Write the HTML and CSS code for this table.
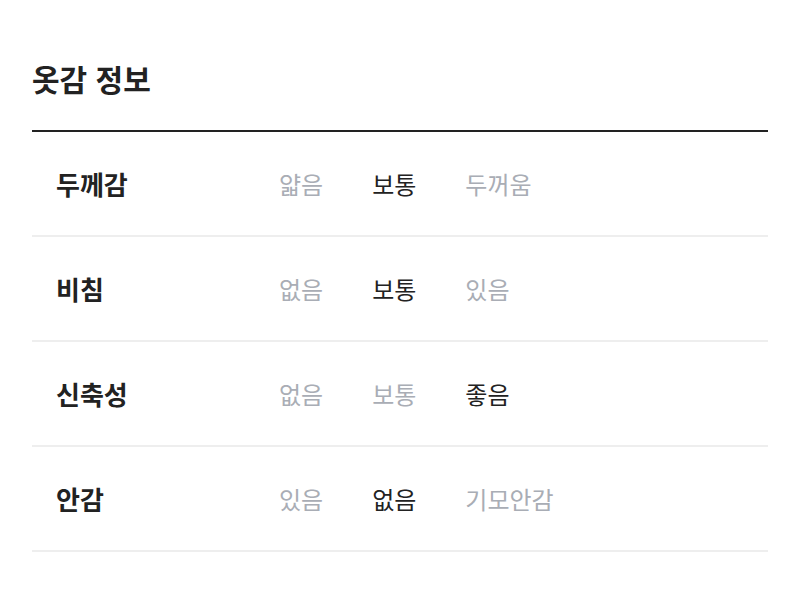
FILE: index.html
```html
<!DOCTYPE html>
<html lang="ko">
<head>
<meta charset="utf-8">
<link rel="stylesheet" href="styles.css">
</head>
<body>
<section class="fabric">
  <h2 class="title">옷감 정보</h2>
  <div class="table">
    <div class="row">
      <div class="label">두께감</div>
      <div class="opts"><span class="opt">얇음</span><span class="opt on">보통</span><span class="opt">두꺼움</span></div>
    </div>
    <div class="row">
      <div class="label">비침</div>
      <div class="opts"><span class="opt">없음</span><span class="opt on">보통</span><span class="opt">있음</span></div>
    </div>
    <div class="row">
      <div class="label">신축성</div>
      <div class="opts"><span class="opt">없음</span><span class="opt">보통</span><span class="opt on">좋음</span></div>
    </div>
    <div class="row">
      <div class="label">안감</div>
      <div class="opts"><span class="opt">있음</span><span class="opt on">없음</span><span class="opt">기모안감</span></div>
    </div>
  </div>
</section>
</body>
</html>
```
FILE: styles.css
```css
html, body {
  margin: 0;
  background: #fff;
}
body {
  font-family: "Noto Sans CJK KR", "Noto Sans", sans-serif;
  color: #222;
}
.fabric {
  padding: 58px 32px 0;
}
.title {
  margin: 0 0 32px;
  font-size: 30px;
  line-height: 40px;
  font-weight: 700;
  color: #222;
}
.table {
  border-top: 2px solid #222;
}
.row {
  display: flex;
  align-items: center;
  height: 103px;
  border-bottom: 2px solid #eeeeee;
  padding-left: 24px;
}
.label {
  width: 223px;
  font-size: 26px;
  font-weight: 700;
  color: #222;
}
.opts {
  display: flex;
  gap: 49px;
  font-size: 24px;
}
.opt {
  color: #a9adb5;
}
.opt.on {
  color: #222;
}
```
